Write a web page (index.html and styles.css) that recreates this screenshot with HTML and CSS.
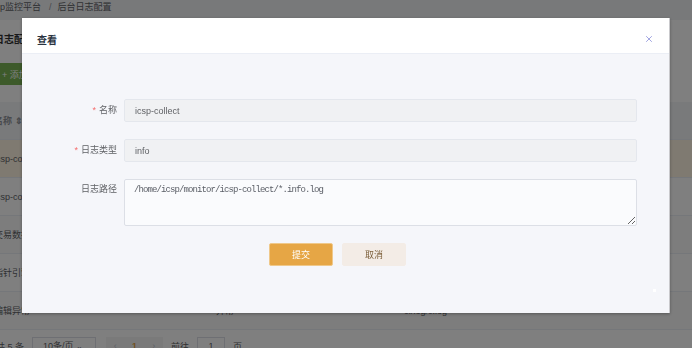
FILE: index.html
```html
<!DOCTYPE html>
<html lang="zh-CN">
<head>
  <meta charset="UTF-8" />
  <meta name="viewport" content="width=device-width, initial-scale=1.0"/>
  <title>后台日志配置</title>
  <link rel="stylesheet" href="styles.css">
</head>
<body>

  <!-- pagina de fundo (coberta pela mascara) -->
  <div class="crumb">
    <span>icsp监控平台</span><span class="crumb-sep">/</span><span>后台日志配置</span>
  </div>

  <div class="page">
    <h2 class="page-title">日志配置</h2>
    <div class="toolbar">
      <button class="btn-add">+ 添加</button>
    </div>

    <div class="table">
      <div class="tr th"><span>名称 ⇕</span><span>级别</span><span>路径</span></div>
      <div class="tr tr-current"><span>icsp-collect</span><span>info</span><span>/home/icsp/log</span></div>
      <div class="tr"><span>icsp-collect</span><span>error</span><span>/home/icsp/log</span></div>
      <div class="tr tr-stripe"><span>交易数据</span><span>info</span><span>/home/icsp/data</span></div>
      <div class="tr"><span>指针引擎</span><span>info</span><span>/home/icsp/ptr</span></div>
      <div class="tr tr-stripe"><span>编辑异常</span><span>异常</span><span>c:/log/c.log</span></div>
    </div>

    <div class="pager">
      <span>共 5 条</span>
      <span class="pager-size">10条/页 <small>⌄</small></span>
      <span class="pager-nums"><i>‹</i><b>1</b><i>›</i></span>
      <span>前往</span>
      <span class="pager-jump">1</span>
      <span>页</span>
    </div>
  </div>

  <div class="mask"></div>

  <!-- dialogo "查看" -->
  <div class="dialog">
    <div class="dialog-head">
      <span class="dialog-title">查看</span>
      <button type="button" class="dialog-close">
        <svg width="8" height="8" viewBox="0 0 8 8"><path d="M1.2 1.2L6.8 6.8M6.8 1.2L1.2 6.8" stroke="#a2a6e2" stroke-width="1" fill="none"/></svg>
      </button>
    </div>
    <div class="dialog-body">
      <form class="form">
        <div class="form-item">
          <label class="form-label"><em>*</em>名称</label>
          <input class="form-input" type="text" value="icsp-collect" readonly />
        </div>
        <div class="form-item">
          <label class="form-label"><em>*</em>日志类型</label>
          <input class="form-input" type="text" value="info" readonly />
        </div>
        <div class="form-item">
          <label class="form-label label-top">日志路径</label>
          <textarea class="form-textarea" readonly>/home/icsp/monitor/icsp-collect/*.info.log</textarea>
        </div>
        <div class="form-actions">
          <button type="button" class="btn btn-submit">提交</button>
          <button type="button" class="btn btn-cancel">取消</button>
        </div>
      </form>
    </div>
    <span class="dialog-dot"></span>
  </div>

</body>
</html>
```

FILE: styles.css
```css
:root {
  --texto: #606266;
  --titulo: #2b3441;
  --laranja: #e6a645;
}

* {
  margin: 0;
  padding: 0;
  box-sizing: border-box;
}

body {
  width: 692px;
  height: 348px;
  overflow: hidden;
  background: #ffffff;
  font-family: "Liberation Sans", "Noto Sans CJK SC", sans-serif;
  color: var(--texto);
}

/* fundo */
.crumb {
  height: 20px;
  padding-top: 2px;
  margin-left: -11px;
  font-size: 9px;
  line-height: 10px;
  background: #f0f2f5;
}

.crumb-sep {
  margin: 0 6px 0 8px;
  color: #909399;
}

.page {
  margin-left: -6px;
}

.page-title {
  margin-top: 10px;
  height: 20px;
  font-size: 10px;
  line-height: 20px;
  color: #303133;
}

.toolbar {
  margin-top: 13px;
}

.btn-add {
  height: 22px;
  padding: 0 10px 0 8px;
  border: none;
  border-radius: 2px;
  background: #7ab454;
  color: #fff;
  font-family: inherit;
  font-size: 9px;
}

.table {
  margin-top: 17px;
}

.tr {
  display: grid;
  grid-template-columns: 222px 188px 1fr;
  height: 38px;
  align-items: center;
  font-size: 9px;
  border-bottom: 1px solid #ebeef5;
}

.th {
  background: #f2f4f7;
  font-weight: bold;
  color: #909399;
}

.tr-current {
  background: #fff5e3;
}

.tr-stripe {
  background: #fafafa;
}

.pager {
  display: flex;
  align-items: center;
  gap: 8px;
  margin-top: 7px;
  margin-left: 2px;
  height: 18px;
  font-size: 9px;
}

.pager-size {
  width: 64px;
  height: 18px;
  border: 1px solid #dcdfe6;
  padding-left: 10px;
  line-height: 16px;
}

.pager-nums {
  display: flex;
  justify-content: space-around;
  width: 57px;
  height: 18px;
  line-height: 18px;
  background: #f4f4f5;
  margin-left: 2px;
}

.pager-nums i {
  font-style: normal;
  color: #c0c4cc;
}

.pager-nums b {
  color: var(--laranja);
}

.pager-jump {
  width: 28px;
  height: 18px;
  border: 1px solid #dcdfe6;
  text-align: center;
  line-height: 16px;
}

.mask {
  position: fixed;
  inset: 0;
  background: rgba(0, 0, 0, 0.5);
}

/* dialogo */
.dialog {
  position: fixed;
  left: 22px;
  top: 18px;
  width: 648px;
  height: 295px;
  background: #f5f6fa;
  border-right: 1px solid #c9c9cc;
  box-shadow: 0 1px 3px rgba(0, 0, 0, 0.3);
}

.dialog-head {
  display: flex;
  align-items: center;
  height: 36px;
  padding: 0 16px 0 15px;
  background: #ffffff;
  border-bottom: 1px solid #ebeef5;
}

.dialog-title {
  margin-top: 11px;
  font-size: 10px;
  line-height: 10px;
  font-weight: bold;
  color: var(--titulo);
}

.dialog-close {
  margin-left: auto;
  margin-top: 6px;
  width: 8px;
  height: 8px;
  border: none;
  background: none;
  display: flex;
}

.form {
  padding: 45px 32px 0 0;
}

.form-item {
  display: flex;
  margin-bottom: 17px;
}

.form-label {
  width: 102px;
  padding-right: 7px;
  text-align: right;
  font-size: 9px;
  line-height: 23px;
  color: var(--texto);
}

.form-label em {
  font-style: normal;
  color: #f56c6c;
  margin-right: 3px;
}

.label-top {
  line-height: 21px;
}

.form-input {
  flex: 1;
  height: 23px;
  padding: 0 10px;
  border: 1px solid #e4e7ed;
  border-radius: 2px;
  background: #f0f1f3;
  font-family: inherit;
  font-size: 9px;
  color: var(--texto);
  outline: none;
}

.form-textarea {
  flex: 1;
  height: 47px;
  padding: 5px 9px;
  border: 1px solid #dcdfe6;
  border-radius: 2px;
  background: #fafbfd;
  font-family: "Liberation Mono", monospace;
  font-size: 9px;
  line-height: 10px;
  letter-spacing: -0.9px;
  color: #5a5e66;
  outline: none;
}

.form-actions {
  display: flex;
  gap: 9px;
  padding-left: 247px;
  margin-top: 8px;
}

.btn {
  width: 64px;
  height: 23px;
  border-radius: 2px;
  font-family: inherit;
  font-size: 9px;
  cursor: pointer;
}

.btn-submit {
  background: var(--laranja);
  border: 1px solid #efc88a;
  color: #ffffff;
}

.btn-cancel {
  background: #f3ece6;
  border: 1px solid #f3ece6;
  color: #7c5f3a;
}

.dialog-dot {
  position: absolute;
  left: 631px;
  top: 271px;
  width: 3px;
  height: 3px;
  background: #ffffff;
}
```
